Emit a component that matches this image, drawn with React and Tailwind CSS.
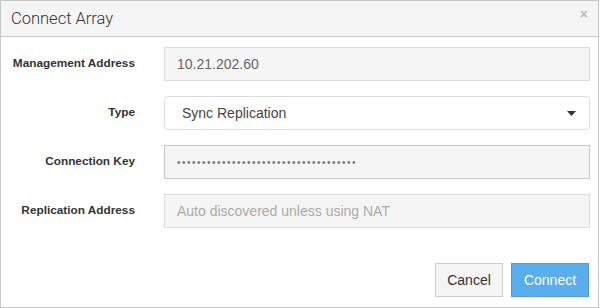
import React from "react";

function Field({ label, children }) {
  return (
    <div className="flex items-start">
      <div className="w-[134px] shrink-0 text-right pt-[8px] text-[11.8px] leading-[16px] font-bold text-[#333]">
        {label}
      </div>
      <div className="ml-[29px] w-[426px]">{children}</div>
    </div>
  );
}

export default function App() {
  const dots = "•".repeat(36);
  return (
    <div className="w-[600px] h-[308px] bg-white" style={{ fontFamily: '"Liberation Sans", Arial, sans-serif' }}>
      <div className="w-[599px] h-[308px] border border-[#c8c8c8] flex flex-col bg-white">
        <div className="h-[36px] shrink-0 bg-[#f5f5f5] border-b border-[#c8c8c8] flex items-start justify-between">
          <div className="pl-[10px] pt-[6px] text-[16.5px] leading-[24px] font-light text-[#333]" style={{ fontFamily: 'Roboto, "Liberation Sans", sans-serif' }}>
            Connect Array
          </div>
          <div className="pr-[10px] pt-[4px] text-[14px] leading-[18px] font-bold text-[#bbb]">×</div>
        </div>
        <div className="pt-[10px] flex flex-col gap-[15px]">
          <Field label="Management Address">
            <div className="h-[34px] border border-[#dcdcdc] bg-[#f5f5f5] pl-[12px] flex items-center text-[14px] text-[#666]">
              10.21.202.60
            </div>
          </Field>
          <Field label="Type">
            <div className="h-[34px] border border-[#dcdcdc] rounded-[4px] bg-white pl-[17px] pr-[12px] flex items-center justify-between text-[14px] text-[#444]">
              <span>Sync Replication</span>
              <svg width="9" height="5" viewBox="0 0 9 5" className="mr-[1px]">
                <path d="M0 0 L9 0 L4.5 5 Z" fill="#333" />
              </svg>
            </div>
          </Field>
          <Field label="Connection Key">
            <div className="h-[34px] border border-[#c8c8c8] bg-[#f5f5f5] pl-[12px] flex items-center text-[10px] tracking-[1.5px] text-[#777]">
              {dots}
            </div>
          </Field>
          <Field label="Replication Address">
            <div className="h-[34px] border border-[#dcdcdc] bg-[#f5f5f5] pl-[12px] flex items-center text-[14px] text-[#aaa]">
              Auto discovered unless using NAT
            </div>
          </Field>
        </div>
        <div className="mt-auto pb-[10px] pr-[9px] flex justify-end gap-[8px]">
          <button className="h-[34px] w-[68px] border border-[#cccccc] bg-[#f5f5f5] text-[14px] text-[#333]">
            Cancel
          </button>
          <button className="h-[34px] w-[78px] border border-[#4a9fe3] bg-[#5aaeec] text-[14px] text-white">
            Connect
          </button>
        </div>
      </div>
    </div>
  );
}
